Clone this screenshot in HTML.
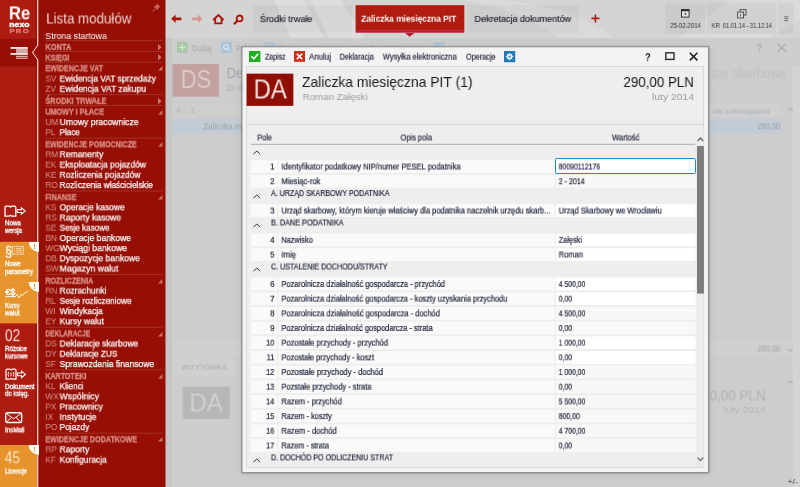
<!DOCTYPE html><html><head><meta charset="utf-8"><title>Renexo PRO</title><style>
html,body{margin:0;padding:0;}body{width:800px;height:487px;overflow:hidden;position:relative;background:#cbcbcb;font-family:"Liberation Sans", sans-serif;}
.t{position:absolute;left:0;top:0;white-space:nowrap;line-height:1;display:inline-block;transform-origin:0 0;will-change:transform;}
svg{position:absolute;overflow:visible;}
</style></head><body>
<svg style="left:165px;top:0px" width="635" height="487"><rect x="0.00" y="0.00" width="635.00" height="487.00" fill="#cdcdcd"/></svg>
<svg style="left:165px;top:0px" width="635" height="38"><rect x="0.00" y="0.00" width="635.00" height="38.00" fill="#d4d4d4"/></svg>
<svg style="left:165px;top:38px" width="7" height="449"><rect x="0.50" y="0.00" width="6.50" height="449.00" fill="#c6c6c6"/></svg>
<svg style="left:792px;top:66px" width="8" height="421"><rect x="0.60" y="0.00" width="7.40" height="421.00" fill="#d4d4d4"/></svg>
<svg style="left:0px;top:0px" width="38" height="487"><rect x="0.00" y="0.00" width="38.00" height="487.00" fill="#ad1c10"/></svg>
<svg style="left:35px;top:0px" width="2" height="487"><rect x="0.00" y="0.00" width="2.00" height="487.00" fill="#a0170c"/></svg>
<svg style="left:0px;top:38px" width="37" height="29"><rect x="0.00" y="0.90" width="37.00" height="27.50" fill="#960e04"/></svg>
<svg style="left:38px;top:0px" width="128" height="487"><rect x="0.00" y="0.00" width="127.50" height="487.00" fill="#960e04"/></svg>
<svg style="left:0;top:0" width="40" height="487"><path d="M37.7 0 V45.5 L32.7 52.5 L37.7 59.5 V487" fill="none" stroke="#f3d9d6" stroke-width="1.2"/><path d="M38.3 45.5 L33.3 52.5 L38.3 59.5 Z" fill="#960e04"/></svg>
<span class="t" id="t0" style="font-size:14.9px;color:#f0d4d0;transform:translate(46.20px,11.49px) scaleX(0.8951);">Lista modułów</span>
<span class="t" id="t1" style="font-size:9.2px;color:#ffffff;transform:translate(45.30px,32.01px) scaleX(0.9571);">Strona startowa</span>
<svg style="left:152px;top:3px" width="9" height="9" viewBox="0 0 9 9"><path d="M5 0.5 L8.5 4 L7.3 4.3 L5.8 5.8 L5.6 7.6 L1.4 3.4 L3.2 3.2 L4.7 1.7 Z" fill="#bd6a61"/><path d="M3 6 L0.5 8.5" stroke="#bd6a61" stroke-width="1"/></svg>
<svg style="left:45px;top:40px" width="118" height="2"><rect x="0.50" y="0.30" width="117.00" height="0.90" fill="#a7362b"/></svg>
<span class="t" id="t2" style="font-size:8.4px;color:#dc9088;font-weight:bold;transform:translate(45.40px,42.94px) scaleX(0.8917);-webkit-text-stroke:0.3px #dc9088;">KONTA</span>
<svg style="left:158.3px;top:43.6px" width="4" height="7"><path d="M0 0 L3.6 3.3 L0 6.6 Z" fill="#c9776d"/></svg>
<svg style="left:45px;top:51px" width="118" height="1"><rect x="0.50" y="0.00" width="117.00" height="0.90" fill="#a7362b"/></svg>
<span class="t" id="t3" style="font-size:8.4px;color:#dc9088;font-weight:bold;transform:translate(45.40px,53.66px) scaleX(0.8489);-webkit-text-stroke:0.3px #dc9088;">KSIĘGI</span>
<svg style="left:158.3px;top:54.300000000000004px" width="4" height="7"><path d="M0 0 L3.6 3.3 L0 6.6 Z" fill="#c9776d"/></svg>
<svg style="left:45px;top:61px" width="118" height="2"><rect x="0.50" y="0.70" width="117.00" height="0.90" fill="#a7362b"/></svg>
<span class="t" id="t4" style="font-size:8.4px;color:#dc9088;font-weight:bold;transform:translate(45.40px,64.31px) scaleX(0.8518);-webkit-text-stroke:0.3px #dc9088;">EWIDENCJE VAT</span>
<svg style="left:157.6px;top:66.39999999999999px" width="5" height="5"><path d="M4.4 0 V4.4 H0 Z" fill="#c6756b"/></svg>
<span class="t" id="t5" style="font-size:9.5px;color:#dc968e;transform:translate(45.40px,73.55px) scaleX(0.8700);">SV</span>
<span class="t" id="t6" style="font-size:9.3px;color:#ffffff;transform:translate(59.60px,74.53px) scaleX(0.9046);-webkit-text-stroke:0.25px #fff;">Ewidencja VAT sprzedaży</span>
<span class="t" id="t7" style="font-size:9.5px;color:#dc968e;transform:translate(45.40px,83.77px) scaleX(0.8700);">ZV</span>
<span class="t" id="t8" style="font-size:9.3px;color:#ffffff;transform:translate(59.60px,84.74px) scaleX(0.9185);-webkit-text-stroke:0.25px #fff;">Ewidencja VAT zakupu</span>
<svg style="left:45px;top:94px" width="118" height="2"><rect x="0.50" y="0.20" width="117.00" height="0.90" fill="#a7362b"/></svg>
<span class="t" id="t9" style="font-size:8.4px;color:#dc9088;font-weight:bold;transform:translate(45.40px,96.80px) scaleX(0.8686);-webkit-text-stroke:0.3px #dc9088;">ŚRODKI TRWAŁE</span>
<svg style="left:158.3px;top:97.5px" width="4" height="7"><path d="M0 0 L3.6 3.3 L0 6.6 Z" fill="#c9776d"/></svg>
<svg style="left:45px;top:105px" width="118" height="1"><rect x="0.50" y="0.00" width="117.00" height="0.90" fill="#a7362b"/></svg>
<span class="t" id="t10" style="font-size:8.4px;color:#dc9088;font-weight:bold;transform:translate(45.40px,107.66px) scaleX(0.8586);-webkit-text-stroke:0.3px #dc9088;">UMOWY I PŁACE</span>
<svg style="left:157.6px;top:109.69999999999999px" width="5" height="5"><path d="M4.4 0 V4.4 H0 Z" fill="#c6756b"/></svg>
<span class="t" id="t11" style="font-size:9.5px;color:#dc968e;transform:translate(45.40px,117.06px) scaleX(0.8700);">UM</span>
<span class="t" id="t12" style="font-size:9.3px;color:#ffffff;transform:translate(59.60px,118.03px) scaleX(0.9267);-webkit-text-stroke:0.25px #fff;">Umowy pracownicze</span>
<span class="t" id="t13" style="font-size:9.5px;color:#dc968e;transform:translate(45.40px,127.13px) scaleX(0.8700);">PL</span>
<span class="t" id="t14" style="font-size:9.3px;color:#ffffff;transform:translate(59.60px,128.17px) scaleX(0.8639);-webkit-text-stroke:0.25px #fff;">Płace</span>
<svg style="left:45px;top:137px" width="118" height="2"><rect x="0.50" y="0.70" width="117.00" height="0.90" fill="#a7362b"/></svg>
<span class="t" id="t15" style="font-size:8.4px;color:#dc9088;font-weight:bold;transform:translate(45.40px,140.31px) scaleX(0.8375);-webkit-text-stroke:0.3px #dc9088;">EWIDENCJE POMOCNICZE</span>
<svg style="left:157.6px;top:142.4px" width="5" height="5"><path d="M4.4 0 V4.4 H0 Z" fill="#c6756b"/></svg>
<span class="t" id="t16" style="font-size:9.5px;color:#dc968e;transform:translate(45.40px,149.27px) scaleX(0.8700);">RM</span>
<span class="t" id="t17" style="font-size:9.3px;color:#ffffff;transform:translate(59.60px,150.24px) scaleX(0.9191);-webkit-text-stroke:0.25px #fff;">Remanenty</span>
<span class="t" id="t18" style="font-size:9.5px;color:#dc968e;transform:translate(45.40px,159.55px) scaleX(0.8700);">EK</span>
<span class="t" id="t19" style="font-size:9.3px;color:#ffffff;transform:translate(59.60px,160.53px) scaleX(0.9135);-webkit-text-stroke:0.25px #fff;">Eksploatacja pojazdów</span>
<span class="t" id="t20" style="font-size:9.5px;color:#dc968e;transform:translate(45.40px,169.77px) scaleX(0.8700);">KE</span>
<span class="t" id="t21" style="font-size:9.3px;color:#ffffff;transform:translate(59.60px,170.74px) scaleX(0.9037);-webkit-text-stroke:0.25px #fff;">Rozliczenia pojazdów</span>
<span class="t" id="t22" style="font-size:9.5px;color:#dc968e;transform:translate(45.40px,179.92px) scaleX(0.8700);">RO</span>
<span class="t" id="t23" style="font-size:9.3px;color:#ffffff;transform:translate(59.60px,180.95px) scaleX(0.8808);-webkit-text-stroke:0.25px #fff;">Rozliczenia właścicielskie</span>
<svg style="left:45px;top:190px" width="118" height="2"><rect x="0.50" y="0.50" width="117.00" height="0.90" fill="#a7362b"/></svg>
<span class="t" id="t24" style="font-size:8.4px;color:#dc9088;font-weight:bold;transform:translate(45.40px,193.16px) scaleX(0.8432);-webkit-text-stroke:0.3px #dc9088;">FINANSE</span>
<svg style="left:157.6px;top:195.2px" width="5" height="5"><path d="M4.4 0 V4.4 H0 Z" fill="#c6756b"/></svg>
<span class="t" id="t25" style="font-size:9.5px;color:#dc968e;transform:translate(45.40px,202.27px) scaleX(0.8700);">KS</span>
<span class="t" id="t26" style="font-size:9.3px;color:#ffffff;transform:translate(59.60px,203.24px) scaleX(0.9047);-webkit-text-stroke:0.25px #fff;">Operacje kasowe</span>
<span class="t" id="t27" style="font-size:9.5px;color:#dc968e;transform:translate(45.40px,212.42px) scaleX(0.8700);">RS</span>
<span class="t" id="t28" style="font-size:9.3px;color:#ffffff;transform:translate(59.60px,213.45px) scaleX(0.9209);-webkit-text-stroke:0.25px #fff;">Raporty kasowe</span>
<span class="t" id="t29" style="font-size:9.5px;color:#dc968e;transform:translate(45.40px,222.63px) scaleX(0.8700);">SE</span>
<span class="t" id="t30" style="font-size:9.3px;color:#ffffff;transform:translate(59.60px,223.67px) scaleX(0.8697);-webkit-text-stroke:0.25px #fff;">Sesje kasowe</span>
<span class="t" id="t31" style="font-size:9.5px;color:#dc968e;transform:translate(45.40px,232.92px) scaleX(0.8700);">BN</span>
<span class="t" id="t32" style="font-size:9.3px;color:#ffffff;transform:translate(59.60px,233.95px) scaleX(0.9209);-webkit-text-stroke:0.25px #fff;">Operacje bankowe</span>
<span class="t" id="t33" style="font-size:9.5px;color:#dc968e;transform:translate(45.40px,243.06px) scaleX(0.8700);">WG</span>
<span class="t" id="t34" style="font-size:9.3px;color:#ffffff;transform:translate(59.60px,244.03px) scaleX(0.9327);-webkit-text-stroke:0.25px #fff;">Wyciągi bankowe</span>
<span class="t" id="t35" style="font-size:9.5px;color:#dc968e;transform:translate(45.40px,253.27px) scaleX(0.8700);">DB</span>
<span class="t" id="t36" style="font-size:9.3px;color:#ffffff;transform:translate(59.60px,254.24px) scaleX(0.9182);-webkit-text-stroke:0.25px #fff;">Dyspozycje bankowe</span>
<span class="t" id="t37" style="font-size:9.5px;color:#dc968e;transform:translate(45.40px,263.42px) scaleX(0.8700);">SW</span>
<span class="t" id="t38" style="font-size:9.3px;color:#ffffff;transform:translate(59.60px,264.45px) scaleX(0.9465);-webkit-text-stroke:0.25px #fff;">Magazyn walut</span>
<svg style="left:45px;top:274px" width="118" height="1"><rect x="0.50" y="0.00" width="117.00" height="0.90" fill="#a7362b"/></svg>
<span class="t" id="t39" style="font-size:8.4px;color:#dc9088;font-weight:bold;transform:translate(45.40px,276.66px) scaleX(0.8491);-webkit-text-stroke:0.3px #dc9088;">ROZLICZENIA</span>
<svg style="left:157.6px;top:278.70000000000005px" width="5" height="5"><path d="M4.4 0 V4.4 H0 Z" fill="#c6756b"/></svg>
<span class="t" id="t40" style="font-size:9.5px;color:#dc968e;transform:translate(45.40px,285.55px) scaleX(0.8700);">RN</span>
<span class="t" id="t41" style="font-size:9.3px;color:#ffffff;transform:translate(59.60px,286.53px) scaleX(0.9074);-webkit-text-stroke:0.25px #fff;">Rozrachunki</span>
<span class="t" id="t42" style="font-size:9.5px;color:#dc968e;transform:translate(45.40px,295.85px) scaleX(0.8700);">RL</span>
<span class="t" id="t43" style="font-size:9.3px;color:#ffffff;transform:translate(59.60px,296.81px) scaleX(0.8817);-webkit-text-stroke:0.25px #fff;">Sesje rozliczeniowe</span>
<span class="t" id="t44" style="font-size:9.5px;color:#dc968e;transform:translate(45.40px,306.06px) scaleX(0.8700);">WI</span>
<span class="t" id="t45" style="font-size:9.3px;color:#ffffff;transform:translate(59.60px,307.03px) scaleX(0.9086);-webkit-text-stroke:0.25px #fff;">Windykacja</span>
<span class="t" id="t46" style="font-size:9.5px;color:#dc968e;transform:translate(45.40px,316.27px) scaleX(0.8700);">EY</span>
<span class="t" id="t47" style="font-size:9.3px;color:#ffffff;transform:translate(59.60px,317.24px) scaleX(0.9238);-webkit-text-stroke:0.25px #fff;">Kursy walut</span>
<svg style="left:45px;top:326px" width="118" height="2"><rect x="0.50" y="0.80" width="117.00" height="0.90" fill="#a7362b"/></svg>
<span class="t" id="t48" style="font-size:8.4px;color:#dc9088;font-weight:bold;transform:translate(45.40px,329.44px) scaleX(0.7825);-webkit-text-stroke:0.3px #dc9088;">DEKLARACJE</span>
<svg style="left:157.6px;top:331.5px" width="5" height="5"><path d="M4.4 0 V4.4 H0 Z" fill="#c6756b"/></svg>
<span class="t" id="t49" style="font-size:9.5px;color:#dc968e;transform:translate(45.40px,338.42px) scaleX(0.8700);">DS</span>
<span class="t" id="t50" style="font-size:9.3px;color:#ffffff;transform:translate(59.60px,339.45px) scaleX(0.9120);-webkit-text-stroke:0.25px #fff;">Deklaracje skarbowe</span>
<span class="t" id="t51" style="font-size:9.5px;color:#dc968e;transform:translate(45.40px,348.63px) scaleX(0.8700);">DY</span>
<span class="t" id="t52" style="font-size:9.3px;color:#ffffff;transform:translate(59.60px,349.66px) scaleX(0.8862);-webkit-text-stroke:0.25px #fff;">Deklaracje ZUS</span>
<span class="t" id="t53" style="font-size:9.5px;color:#dc968e;transform:translate(45.40px,358.92px) scaleX(0.8700);">SF</span>
<span class="t" id="t54" style="font-size:9.3px;color:#ffffff;transform:translate(59.60px,359.95px) scaleX(0.9141);-webkit-text-stroke:0.25px #fff;">Sprawozdania finansowe</span>
<svg style="left:45px;top:369px" width="118" height="2"><rect x="0.50" y="0.40" width="117.00" height="0.90" fill="#a7362b"/></svg>
<span class="t" id="t55" style="font-size:8.4px;color:#dc9088;font-weight:bold;transform:translate(45.40px,372.02px) scaleX(0.8439);-webkit-text-stroke:0.3px #dc9088;">KARTOTEKI</span>
<svg style="left:157.6px;top:374.1px" width="5" height="5"><path d="M4.4 0 V4.4 H0 Z" fill="#c6756b"/></svg>
<span class="t" id="t56" style="font-size:9.5px;color:#dc968e;transform:translate(45.40px,381.13px) scaleX(0.8700);">KL</span>
<span class="t" id="t57" style="font-size:9.3px;color:#ffffff;transform:translate(59.60px,382.16px) scaleX(0.8726);-webkit-text-stroke:0.25px #fff;">Klienci</span>
<span class="t" id="t58" style="font-size:9.5px;color:#dc968e;transform:translate(45.40px,391.34px) scaleX(0.8700);">WX</span>
<span class="t" id="t59" style="font-size:9.3px;color:#ffffff;transform:translate(59.60px,392.31px) scaleX(0.9298);-webkit-text-stroke:0.25px #fff;">Wspólnicy</span>
<span class="t" id="t60" style="font-size:9.5px;color:#dc968e;transform:translate(45.40px,401.55px) scaleX(0.8700);">PX</span>
<span class="t" id="t61" style="font-size:9.3px;color:#ffffff;transform:translate(59.60px,402.53px) scaleX(0.9086);-webkit-text-stroke:0.25px #fff;">Pracownicy</span>
<span class="t" id="t62" style="font-size:9.5px;color:#dc968e;transform:translate(45.40px,411.85px) scaleX(0.8700);">IX</span>
<span class="t" id="t63" style="font-size:9.3px;color:#ffffff;transform:translate(59.60px,412.82px) scaleX(0.9394);-webkit-text-stroke:0.25px #fff;">Instytucje</span>
<span class="t" id="t64" style="font-size:9.5px;color:#dc968e;transform:translate(45.40px,421.92px) scaleX(0.8700);">PO</span>
<span class="t" id="t65" style="font-size:9.3px;color:#ffffff;transform:translate(59.60px,422.95px) scaleX(0.8964);-webkit-text-stroke:0.25px #fff;">Pojazdy</span>
<svg style="left:45px;top:432px" width="118" height="2"><rect x="0.50" y="0.70" width="117.00" height="0.90" fill="#a7362b"/></svg>
<span class="t" id="t66" style="font-size:8.4px;color:#dc9088;font-weight:bold;transform:translate(45.40px,435.31px) scaleX(0.8535);-webkit-text-stroke:0.3px #dc9088;">EWIDENCJE DODATKOWE</span>
<svg style="left:157.6px;top:437.40000000000003px" width="5" height="5"><path d="M4.4 0 V4.4 H0 Z" fill="#c6756b"/></svg>
<span class="t" id="t67" style="font-size:9.5px;color:#dc968e;transform:translate(45.40px,444.34px) scaleX(0.8700);">RP</span>
<span class="t" id="t68" style="font-size:9.3px;color:#ffffff;transform:translate(59.60px,445.31px) scaleX(0.9106);-webkit-text-stroke:0.25px #fff;">Raporty</span>
<span class="t" id="t69" style="font-size:9.5px;color:#dc968e;transform:translate(45.40px,454.63px) scaleX(0.8700);">KF</span>
<span class="t" id="t70" style="font-size:9.3px;color:#ffffff;transform:translate(59.60px,455.67px) scaleX(0.9122);-webkit-text-stroke:0.25px #fff;">Konfiguracja</span>
<span class="t" id="t71" style="font-size:18.3px;color:#ffffff;font-weight:bold;transform:translate(8.90px,4.41px) scaleX(0.9070);">Re</span>
<span class="t" id="t72" style="font-size:7.3px;color:#ffffff;font-weight:bold;transform:translate(9.30px,21.33px) scaleX(1.1919);-webkit-text-stroke:0.35px #fff;">nexo</span>
<span class="t" id="t73" style="font-size:5.2px;color:#d48a80;font-weight:bold;transform:translate(9.40px,29.00px) scaleX(1.4456);letter-spacing:1px;-webkit-text-stroke:0.25px #d48a80;">PRO</span>
<svg style="left:10px;top:46px" width="19" height="14" viewBox="0 0 19 14"><rect x="6.1" y="2.6" width="11.65" height="4.6" fill="#c79d98"/><rect x="6.1" y="3.7" width="11.65" height="0.6" fill="#dcc1be"/><rect x="6.1" y="5.4" width="11.65" height="0.6" fill="#dcc1be"/><rect x="0.5" y="1.1" width="17.25" height="1.65" fill="#fff"/><rect x="0.5" y="7.1" width="17.25" height="1.65" fill="#fff"/><rect x="6.1" y="9.8" width="11.65" height="1" fill="#efd9d6"/><rect x="6.1" y="11.7" width="11.65" height="1" fill="#efd9d6"/></svg>
<svg style="left:4.2px;top:204.6px" width="23" height="12" viewBox="0 0 23 12"><path d="M1 2.4 Q1 1.2 2.2 1.2 H5 Q6.2 1.2 6.4 2.6 Q6.6 1.2 7.8 1.2 H10.6 Q11.8 1.2 11.8 2.4 V11 H7.8 Q6.6 11 6.4 9.8 Q6.2 11 5 11 H1 Z" fill="none" stroke="#fff" stroke-width="1.25"/><path d="M13.2 4.6 H17.4 V2.8 L21.2 6 L17.4 9.2 V7.4 H13.2 Z" fill="none" stroke="#fff" stroke-width="1.05"/></svg>
<span class="t" id="t74" style="font-size:6.3px;color:#ffffff;transform:translate(5.00px,220.35px) scaleX(0.9870);-webkit-text-stroke:0.3px #fff;">Nowa</span>
<span class="t" id="t75" style="font-size:6.3px;color:#ffffff;transform:translate(5.00px,227.85px) scaleX(0.9284);-webkit-text-stroke:0.3px #fff;">wersja</span>
<svg style="left:0px;top:241px" width="37" height="42"><rect x="0.00" y="0.80" width="37.00" height="40.40" fill="#e5932a"/></svg>
<svg style="left:0px;top:282px" width="37" height="1"><rect x="0.00" y="0.20" width="37.00" height="0.80" fill="#f0b05c"/></svg>
<svg style="left:0px;top:283px" width="37" height="41"><rect x="0.00" y="0.00" width="37.00" height="40.40" fill="#e5932a"/></svg>
<svg style="left:28.6px;top:241.7px" width="10" height="10" viewBox="0 0 10 10"><path d="M-0.2 0 A10.2 9.8 0 0 0 10 9.8 V0 Z" fill="#ffffff"/></svg>
<span class="t" id="t76" style="font-size:7.0px;color:#e08a1e;font-weight:bold;transform:translate(33.30px,242.78px) scaleX(1.0000);">!</span>
<svg style="left:28.6px;top:282.4px" width="10" height="10" viewBox="0 0 10 10"><path d="M-0.2 0 A10.2 9.8 0 0 0 10 9.8 V0 Z" fill="#ffffff"/></svg>
<span class="t" id="t77" style="font-size:7.0px;color:#e08a1e;font-weight:bold;transform:translate(33.30px,283.48px) scaleX(1.0000);">!</span>
<span class="t" id="t78" style="font-size:14.8px;color:#ffffff;transform:translate(5.00px,244.81px) scaleX(0.8501);-webkit-text-stroke:0.3px #fff;">§</span>
<svg style="left:12.2px;top:246.4px" width="12" height="9" viewBox="0 0 12 9"><rect x="0.5" y="0.5" width="10.8" height="7.6" fill="none" stroke="#f8dcb8" stroke-width="0.9"/><path d="M2 2.4 H3 M4 2.4 H9.8 M2 4.3 H3 M4 4.3 H9.8 M2 6.2 H3 M4 6.2 H9.8" stroke="#f8dcb8" stroke-width="0.9"/></svg>
<span class="t" id="t79" style="font-size:6.3px;color:#ffffff;transform:translate(5.00px,261.06px) scaleX(0.9746);-webkit-text-stroke:0.3px #fff;">Nowe</span>
<span class="t" id="t80" style="font-size:6.3px;color:#ffffff;transform:translate(5.00px,269.06px) scaleX(0.9803);-webkit-text-stroke:0.3px #fff;">parametry</span>
<span class="t" id="t81" style="font-size:8.8px;color:#ffffff;transform:translate(5.20px,287.70px) scaleX(1.0411);-webkit-text-stroke:0.35px #fff;">€$</span>
<svg style="left:0px;top:284px" width="30" height="18" viewBox="0 0 30 18"><path d="M5.3 12.7 H15.6" stroke="#fff" stroke-width="1"/><path d="M15.4 12.8 L17 10.4 L19 14 L21 10.4 L22.5 11.5 L24.5 9 L27.6 7.3" fill="none" stroke="#fff" stroke-width="0.9"/></svg>
<span class="t" id="t82" style="font-size:6.3px;color:#ffffff;transform:translate(5.00px,302.85px) scaleX(0.9063);-webkit-text-stroke:0.3px #fff;">Kursy</span>
<span class="t" id="t83" style="font-size:6.3px;color:#ffffff;transform:translate(5.00px,310.35px) scaleX(0.9930);-webkit-text-stroke:0.3px #fff;">walut</span>
<span class="t" id="t84" style="font-size:16px;color:#f6dcd9;transform:translate(4.90px,328.13px) scaleX(0.8541);">02</span>
<span class="t" id="t85" style="font-size:6.3px;color:#ffffff;transform:translate(5.00px,346.02px) scaleX(0.9626);-webkit-text-stroke:0.3px #fff;">Różnice</span>
<span class="t" id="t86" style="font-size:6.3px;color:#ffffff;transform:translate(5.00px,353.48px) scaleX(0.9679);-webkit-text-stroke:0.3px #fff;">kursowe</span>
<svg style="left:4.8px;top:367.8px" width="22" height="13" viewBox="0 0 22 13"><path d="M1 2.6 Q1 1.2 2.4 1.2 H4.6 Q5.8 1.2 6 2.4 Q6.2 1.2 7.4 1.2 H9.6 Q11 1.2 11 2.6 V11.2 H7.4 Q6.2 11.2 6 10 Q5.8 11.2 4.6 11.2 H1 Z" fill="none" stroke="#fff" stroke-width="1.2"/><path d="M3.6 4 Q2.6 6.2 3.6 8.6 M8.4 4 Q9.4 6.2 8.4 8.6 M6 4.4 V8.4" fill="none" stroke="#fff" stroke-width="0.9"/><path d="M12.4 5 H16.6 V3.2 L20.4 6.4 L16.6 9.6 V7.8 H12.4 Z" fill="none" stroke="#fff" stroke-width="1.05"/></svg>
<span class="t" id="t87" style="font-size:6.3px;color:#ffffff;transform:translate(5.00px,384.02px) scaleX(1.0312);-webkit-text-stroke:0.3px #fff;">Dokument</span>
<span class="t" id="t88" style="font-size:6.3px;color:#ffffff;transform:translate(5.00px,390.77px) scaleX(0.9483);-webkit-text-stroke:0.3px #fff;">do księg.</span>
<svg style="left:4.5px;top:412.3px" width="18" height="12" viewBox="0 0 18 12"><rect x="0.75" y="0.75" width="15.9" height="9.8" rx="1.6" fill="none" stroke="#fff" stroke-width="1.4"/><path d="M1.6 1.8 L8.7 6.8 L15.8 1.8 M1.8 9.6 L6.6 5.4 M15.6 9.6 L10.8 5.4" fill="none" stroke="#fff" stroke-width="0.95"/></svg>
<span class="t" id="t89" style="font-size:6.3px;color:#ffffff;transform:translate(5.00px,427.27px) scaleX(0.9673);-webkit-text-stroke:0.3px #fff;">InsMail</span>
<svg style="left:0px;top:445px" width="37" height="42"><rect x="0.00" y="0.00" width="37.00" height="42.00" fill="#e5932a"/></svg>
<svg style="left:28.6px;top:445px" width="10" height="10" viewBox="0 0 10 10"><path d="M-0.2 0 A10.2 9.8 0 0 0 10 9.8 V0 Z" fill="#ffffff"/></svg>
<span class="t" id="t90" style="font-size:7.0px;color:#e08a1e;font-weight:bold;transform:translate(33.30px,446.08px) scaleX(1.0000);">!</span>
<span class="t" id="t91" style="font-size:15.6px;color:#fbe6c8;transform:translate(4.80px,450.21px) scaleX(0.8641);">45</span>
<span class="t" id="t92" style="font-size:6.3px;color:#ffffff;transform:translate(5.00px,468.56px) scaleX(0.9433);-webkit-text-stroke:0.3px #fff;">Licencje</span>
<svg style="left:0;top:0" width="800" height="38" viewBox="0 0 800 38"><path d="M274 0 L304 0 L324 38 L291 38 Z M310 0 L341 0 L365 38 L329 38 Z" fill="#e0e0e0" opacity="0.75"/><path d="M462 0 L505 0 Q575 8 614 38 L560 38 Q520 10 462 0 Z" fill="#dddddd" opacity="0.7"/><path d="M730 0 L800 0 L800 20 L768 38 L679 38 Z" fill="#dedede" opacity="0.55"/></svg>
<svg style="left:170px;top:12px" width="75" height="14" viewBox="0 0 75 14"><path d="M1.2 6.8 L5.6 2.6 V5.4 H11.4 V8.2 H5.6 V11 Z" fill="#aa150b"/><path d="M32.4 6.8 L28 2.6 V5.4 H22.2 V8.2 H28 V11 Z" fill="#d6948e"/><path d="M43.2 8 L48.4 3 L53.6 8 M45.2 7 V11.4 H51.6 V7" fill="none" stroke="#aa150b" stroke-width="1.8"/><circle cx="69.6" cy="6.4" r="2.9" fill="none" stroke="#aa150b" stroke-width="1.8"/><path d="M67.5 8.6 L63.9 12.2" stroke="#aa150b" stroke-width="2.2"/></svg>
<svg style="left:253px;top:5px" width="100" height="28"><rect x="0.40" y="0.20" width="98.80" height="27.40" fill="rgba(0,0,0,0.035)"/></svg>
<span class="t" id="t93" style="font-size:9.6px;color:#1c1c2c;transform:translate(259.80px,14.07px) scaleX(0.9522);-webkit-text-stroke:0.15px #1c1c2c;">Środki trwałe</span>
<svg style="left:355px;top:5px" width="110" height="26"><rect x="0.60" y="0.20" width="108.70" height="25.60" fill="#b01c10"/></svg>
<svg style="left:355px;top:30px" width="110" height="3"><rect x="0.60" y="0.60" width="108.70" height="2.10" fill="#c11a36"/></svg>
<svg style="left:405px;top:32.5px" width="10" height="5"><path d="M0 0 H9.4 L4.7 3.7 Z" fill="#c11a36"/></svg>
<span class="t" id="t94" style="font-size:9.7px;color:#ffffff;font-weight:bold;transform:translate(361.20px,13.71px) scaleX(0.8647);">Zaliczka miesięczna PIT</span>
<svg style="left:467px;top:5px" width="113" height="28"><rect x="0.60" y="0.20" width="111.60" height="27.40" fill="rgba(0,0,0,0.035)"/></svg>
<span class="t" id="t95" style="font-size:9.6px;color:#1c1c2c;transform:translate(474.50px,13.93px) scaleX(0.9386);-webkit-text-stroke:0.15px #1c1c2c;">Dekretacja dokumentów</span>
<svg style="left:590.6px;top:14px" width="9" height="9"><path d="M4.4 0.4 V8.4 M0.4 4.4 H8.4" stroke="#b01c10" stroke-width="1.6"/></svg>
<svg style="left:665px;top:3px" width="41" height="32"><rect x="0.00" y="0.30" width="40.60" height="30.80" fill="rgba(0,0,0,0.04)"/></svg>
<svg style="left:707px;top:3px" width="70" height="32"><rect x="0.00" y="0.30" width="69.60" height="30.80" fill="rgba(0,0,0,0.04)"/></svg>
<svg style="left:778px;top:3px" width="16" height="32"><rect x="0.20" y="0.30" width="15.40" height="30.80" fill="rgba(0,0,0,0.04)"/></svg>
<svg style="left:680.5px;top:9px" width="9" height="9" viewBox="0 0 9 9"><rect x="0.5" y="0.5" width="7.6" height="7.6" fill="#e6e6e6" stroke="#333" stroke-width="1"/><rect x="0.5" y="0.5" width="7.6" height="1.8" fill="#333"/><rect x="3.6" y="4.2" width="1.6" height="1.6" fill="#333"/></svg>
<span class="t" id="t96" style="font-size:6.6px;color:#333333;transform:translate(670.20px,22.89px) scaleX(0.9071);">25-02-2014</span>
<svg style="left:737px;top:8.5px" width="10" height="10" viewBox="0 0 10 10"><rect x="3" y="0.6" width="6" height="5.4" fill="none" stroke="#444" stroke-width="0.9"/><rect x="0.6" y="3" width="6" height="6" fill="#d6d6d6" stroke="#444" stroke-width="0.9"/><path d="M3.6 5 V7.4" stroke="#444" stroke-width="0.8"/></svg>
<span class="t" id="t97" style="font-size:6.6px;color:#333333;transform:translate(711.80px,22.89px) scaleX(0.8596);white-space:pre;">KR  01.01.14 - 31.12.14</span>
<svg style="left:784.2px;top:16px" width="5" height="6"><path d="M0.2 0.8 H4.2 M0.2 2.7 H4.2 M0.2 4.6 H4.2" stroke="#666" stroke-width="0.9"/></svg>
<svg style="left:177px;top:42.4px" width="11" height="11"><rect width="10.6" height="10.8" fill="#a8c8a6"/><path d="M5.3 2.2 V8.6 M2.1 5.4 H8.5" stroke="#d6e6d4" stroke-width="1.4"/></svg>
<span class="t" id="t98" style="font-size:8.6px;color:#a9a9a9;transform:translate(192.00px,44.27px) scaleX(0.8679);">Dodaj</span>
<svg style="left:220.5px;top:42.4px" width="11" height="11"><rect width="10.8" height="10.8" fill="#a9c3d6"/><circle cx="5" cy="4.8" r="2.3" fill="none" stroke="#dbe6ee" stroke-width="1.1"/><path d="M6.6 6.6 L8.8 8.8" stroke="#dbe6ee" stroke-width="1.3"/></svg>
<span class="t" id="t99" style="font-size:8.6px;color:#a9a9a9;transform:translate(236.00px,44.27px) scaleX(0.8371);">Pokaż</span>
<svg style="left:263.5px;top:42.4px" width="11" height="11"><rect width="10.8" height="10.8" fill="#b3c6d6"/></svg>
<span class="t" id="t100" style="font-size:8.6px;color:#b0b0b0;transform:translate(279.00px,44.27px) scaleX(0.8236);">Popraw</span>
<span class="t" id="t101" style="font-size:8.6px;color:#b0b0b0;transform:translate(311.00px,44.27px) scaleX(0.8889);">Operacje</span>
<span class="t" id="t102" style="font-size:8.6px;color:#b0b0b0;transform:translate(352.00px,44.27px) scaleX(0.9065);">Wysyłka elektroniczna</span>
<svg style="left:434px;top:42.4px" width="11" height="11"><rect width="10.8" height="10.8" fill="#b3c6d6"/></svg>
<svg style="left:172px;top:63px" width="47" height="34"><rect x="0.40" y="0.90" width="46.60" height="32.70" fill="#c3a19e"/></svg>
<span class="t" id="t103" style="font-size:26.6px;color:#d8cbc9;transform:translate(180.60px,66.01px) scaleX(0.8281);">DS</span>
<span class="t" id="t104" style="font-size:14.6px;color:#a3a6ae;transform:translate(226.60px,65.92px) scaleX(0.8898);">De</span>
<span class="t" id="t105" style="font-size:8.2px;color:#b0b0b0;transform:translate(226.30px,84.64px) scaleX(0.8299);">Za ok</span>
<svg style="left:172px;top:103px" width="12" height="14"><rect x="0.50" y="0.50" width="11.50" height="13.50" fill="#cecece"/></svg>
<svg style="left:185px;top:103px" width="14" height="14"><rect x="0.50" y="0.50" width="13.50" height="13.50" fill="#cecece"/></svg>
<svg style="left:200px;top:103px" width="46" height="14"><rect x="0.50" y="0.50" width="45.00" height="13.50" fill="#cecece"/></svg>
<span class="t" id="t106" style="font-size:7.6px;color:#b0b0b0;transform:translate(176.60px,106.84px) scaleX(0.9300);">K</span>
<span class="t" id="t107" style="font-size:7.6px;color:#b0b0b0;transform:translate(190.60px,106.84px) scaleX(0.9300);">Z</span>
<svg style="left:172px;top:118px" width="610" height="16"><rect x="0.50" y="0.50" width="609.50" height="15.30" fill="#c3ccd4"/></svg>
<span class="t" id="t108" style="font-size:8.4px;color:#9a9fa4;transform:translate(203.40px,122.46px) scaleX(0.9549);">Zaliczka mi</span>
<span class="t" id="t109" style="font-size:12.4px;color:#b2b2b2;font-weight:bold;transform:translate(756.60px,42.63px) scaleX(0.7390);">?</span>
<svg style="left:777.4px;top:43.4px" width="10" height="10"><path d="M0.8 0.8 L8.6 8.6 M8.6 0.8 L0.8 8.6" stroke="#b2b2b2" stroke-width="1.7"/></svg>
<span class="t" id="t110" style="font-size:14.8px;color:#c1c1c1;transform:translate(712.60px,66.02px) scaleX(0.8569);">cje skarbowe</span>
<svg style="left:709px;top:104px" width="74" height="14"><rect x="0.00" y="0.00" width="73.30" height="13.60" fill="#d0d0d0"/></svg>
<span class="t" id="t111" style="font-size:7.8px;color:#a8adb2;transform:translate(712.60px,107.65px) scaleX(0.9359);">ota zobowiązania</span>
<span class="t" id="t112" style="font-size:8.3px;color:#9a9fa4;transform:translate(757.60px,122.23px) scaleX(0.8822);">290,00</span>
<svg style="left:786.6px;top:107.4px" width="7" height="5"><path d="M0.5 3.7 L3.1 1 L5.7 3.7" fill="none" stroke="#b0b0b0" stroke-width="1.2"/></svg>
<svg style="left:172px;top:340px" width="621" height="15"><rect x="0.50" y="0.40" width="620.50" height="14.20" fill="#cfcfcf"/></svg>
<svg style="left:172px;top:340px" width="621" height="1"><rect x="0.50" y="0.20" width="620.50" height="0.80" fill="#d3d3d3"/></svg>
<svg style="left:172px;top:354px" width="621" height="2"><rect x="0.50" y="0.40" width="620.50" height="0.80" fill="#d3d3d3"/></svg>
<svg style="left:172px;top:375px" width="621" height="112"><rect x="0.50" y="0.40" width="620.50" height="111.60" fill="#cdcdcd"/></svg>
<span class="t" id="t113" style="font-size:8.3px;color:#a6a6a6;transform:translate(757.60px,344.44px) scaleX(0.8822);">290,00</span>
<svg style="left:786.6px;top:348px" width="7" height="5"><path d="M0.5 0.8 L3.1 3.5 L5.7 0.8" fill="none" stroke="#b0b0b0" stroke-width="1.2"/></svg>
<svg style="left:172px;top:359px" width="62" height="17"><rect x="0.60" y="0.30" width="61.20" height="16.50" fill="#d0d0d0"/></svg>
<svg style="left:172px;top:375px" width="621" height="2"><rect x="0.60" y="0.60" width="620.00" height="0.80" fill="#d1d1d1"/></svg>
<span class="t" id="t114" style="font-size:7.6px;color:#ababab;transform:translate(181.40px,363.69px) scaleX(0.9695);">WIZYTÓWKA</span>
<svg style="left:182px;top:386px" width="48" height="33"><rect x="0.60" y="0.50" width="47.10" height="32.50" fill="#b7b7b7"/></svg>
<span class="t" id="t115" style="font-size:26.6px;color:#cfcfcf;transform:translate(189.40px,389.41px) scaleX(0.9011);">DA</span>
<svg style="left:786.6px;top:379.8px" width="7" height="5"><path d="M0.5 3.7 L3.1 1 L5.7 3.7" fill="none" stroke="#b4b4b4" stroke-width="1.2"/></svg>
<span class="t" id="t116" style="font-size:14.2px;color:#b3b3b3;transform:translate(709.60px,388.46px) scaleX(0.9466);">0,00 PLN</span>
<span class="t" id="t117" style="font-size:9.4px;color:#b9b9b9;transform:translate(723.60px,405.01px) scaleX(1.1034);">luty 2014</span>
<span class="t" id="t118" style="font-size:7.4px;color:#444444;transform:translate(787.40px,477.79px) scaleX(1.1986);">+/-</span>
<div style="position:absolute;left:242px;top:47px;width:466px;height:425px;background:#f3f3f3;box-shadow:0 0 2.5px 0.5px rgba(0,0,0,0.38), 0 1px 10px 1px rgba(0,0,0,0.06);"></div>
<svg style="left:236px;top:40px" width="480" height="440"><rect x="6.0" y="6.8" width="466.5" height="425.8" fill="#f3f3f3" stroke="#8c8c8c" stroke-width="1"/></svg>
<div style="position:absolute;left:246.2px;top:66px;width:458.2px;height:402.4px;background:#eeeeee;border:1px solid #d9d9d9;box-sizing:border-box;"></div>
<svg style="left:249.3px;top:51.2px" width="12" height="12" viewBox="0 0 12 12"><rect width="11.4" height="11" fill="#1fae1f"/><path d="M2.4 5.4 L4.8 7.8 L9.2 2.8" fill="none" stroke="#fff" stroke-width="1.7"/></svg>
<span class="t" id="t119" style="font-size:8.3px;color:#20253a;transform:translate(265.00px,52.65px) scaleX(0.8430);-webkit-text-stroke:0.18px #20253a;">Zapisz</span>
<svg style="left:294px;top:51.4px" width="12" height="11" viewBox="0 0 12 11"><rect width="11" height="10.8" fill="#d42a1c"/><path d="M2.8 2.7 L8.2 8.1 M8.2 2.7 L2.8 8.1" fill="none" stroke="#fff" stroke-width="1.6"/></svg>
<span class="t" id="t120" style="font-size:8.3px;color:#20253a;transform:translate(309.00px,52.65px) scaleX(0.9533);-webkit-text-stroke:0.18px #20253a;">Anuluj</span>
<span class="t" id="t121" style="font-size:8.3px;color:#20253a;transform:translate(339.60px,52.65px) scaleX(0.8724);-webkit-text-stroke:0.18px #20253a;">Deklaracja</span>
<span class="t" id="t122" style="font-size:8.3px;color:#20253a;transform:translate(382.80px,52.65px) scaleX(0.8998);-webkit-text-stroke:0.18px #20253a;">Wysyłka elektroniczna</span>
<span class="t" id="t123" style="font-size:8.3px;color:#20253a;transform:translate(466.00px,52.65px) scaleX(0.8761);-webkit-text-stroke:0.18px #20253a;">Operacje</span>
<svg style="left:504px;top:51.2px" width="12" height="12" viewBox="0 0 12 12"><rect width="11.2" height="11.2" fill="#2079b8"/><circle cx="5.6" cy="5.6" r="2.2" fill="none" stroke="#e8f2fa" stroke-width="1.3"/><path d="M5.6 1.8 V9.4 M1.8 5.6 H9.4 M2.9 2.9 L8.3 8.3 M8.3 2.9 L2.9 8.3" stroke="#e8f2fa" stroke-width="0.9"/><circle cx="5.6" cy="5.6" r="0.9" fill="#2079b8"/></svg>
<span class="t" id="t124" style="font-size:11.4px;color:#222;font-weight:bold;transform:translate(645.00px,52.04px) scaleX(0.8036);">?</span>
<svg style="left:665.4px;top:52.4px" width="11" height="9"><rect x="0.8" y="0.8" width="8.2" height="6.6" fill="none" stroke="#2a2a2a" stroke-width="1.4"/></svg>
<svg style="left:688.6px;top:52.2px" width="10" height="10"><path d="M0.8 0.8 L8.4 8.4 M8.4 0.8 L0.8 8.4" stroke="#222" stroke-width="1.6"/></svg>
<svg style="left:245px;top:72px" width="50" height="35"><rect x="0.70" y="0.80" width="48.50" height="33.90" fill="#f7f7f7"/></svg>
<svg style="left:246px;top:73px" width="48" height="33"><rect x="0.50" y="0.60" width="46.90" height="32.30" fill="#900f05"/></svg>
<span class="t" id="t125" style="font-size:26.8px;color:#f6dfdc;transform:translate(253.60px,76.46px) scaleX(0.8943);">DA</span>
<span class="t" id="t126" style="font-size:14.4px;color:#1c1c1c;transform:translate(302.00px,74.97px) scaleX(0.9662);">Zaliczka miesięczna PIT (1)</span>
<span class="t" id="t127" style="font-size:9.8px;color:#9c9ca0;transform:translate(302.60px,92.03px) scaleX(0.9947);">Roman Załęski</span>
<span class="t" id="t128" style="font-size:14.4px;color:#1c1c1c;transform:translate(623.40px,74.97px) scaleX(0.9288);">290,00 PLN</span>
<span class="t" id="t129" style="font-size:9.8px;color:#9c9ca0;transform:translate(652.00px,92.11px) scaleX(1.0562);">luty 2014</span>
<svg style="left:247px;top:123px" width="457" height="2"><rect x="0.20" y="0.80" width="456.20" height="1.00" fill="#d2d2d2"/></svg>
<span class="t" id="t130" style="font-size:8.3px;color:#20253a;transform:translate(257.30px,133.45px) scaleX(0.8790);-webkit-text-stroke:0.18px #20253a;">Pole</span>
<span class="t" id="t131" style="font-size:8.3px;color:#20253a;transform:translate(400.50px,133.44px) scaleX(0.8984);-webkit-text-stroke:0.18px #20253a;">Opis pola</span>
<span class="t" id="t132" style="font-size:8.3px;color:#20253a;transform:translate(612.00px,133.44px) scaleX(0.9129);-webkit-text-stroke:0.18px #20253a;">Wartość</span>
<svg style="left:250px;top:143px" width="446" height="2"><rect x="0.80" y="0.80" width="444.60" height="1.10" fill="#b4b4b4"/></svg>
<svg style="left:695px;top:130px" width="9" height="337"><rect x="0.60" y="0.00" width="8.00" height="337.00" fill="#ececec"/></svg>
<svg style="left:697px;top:137.2px" width="8" height="5"><path d="M0.6 4 L3.4 1 L6.2 4" fill="none" stroke="#666" stroke-width="1.3"/></svg>
<svg style="left:697px;top:146px" width="7" height="148"><rect x="0.00" y="0.00" width="6.90" height="147.60" fill="#7c7c7c"/></svg>
<svg style="left:697.2px;top:457px" width="8" height="5"><path d="M0.6 0.6 L3.4 3.6 L6.2 0.6" fill="none" stroke="#666" stroke-width="1.3"/></svg>
<svg style="left:253px;top:150.40px" width="8" height="5"><path d="M0.5 4.2 L3.8 0.9 L7.1 4.2" fill="none" stroke="#333" stroke-width="1"/></svg>
<svg style="left:250px;top:160px" width="28" height="13"><rect x="0.80" y="0.18" width="26.40" height="12.70" fill="#fafafa"/></svg>
<svg style="left:278px;top:160px" width="277" height="13"><rect x="0.60" y="0.18" width="276.00" height="12.70" fill="#fafafa"/></svg>
<div style="position:absolute;left:555.3px;top:158.18px;width:140.6px;height:15.8px;background:#fff;border:1.4px solid #2388d2;border-radius:1.8px;box-sizing:border-box;"></div>
<span class="t" id="t133" style="font-size:8.3px;color:#20253a;transform:translate(270.24px,162.54px) scaleX(0.9000);-webkit-text-stroke:0.2px #20253a;">1</span>
<span class="t" id="t134" style="font-size:8.3px;color:#20253a;transform:translate(281.40px,162.54px) scaleX(0.9135);-webkit-text-stroke:0.2px #20253a;">Identyfikator podatkowy NIP/numer PESEL podatnika</span>
<span class="t" id="t135" style="font-size:8.3px;color:#20253a;transform:translate(558.70px,162.54px) scaleX(0.8254);-webkit-text-stroke:0.2px #20253a;">80090112176</span>
<svg style="left:250px;top:174px" width="28" height="14"><rect x="0.80" y="0.86" width="26.40" height="12.70" fill="#fafafa"/></svg>
<svg style="left:278px;top:174px" width="277" height="14"><rect x="0.60" y="0.86" width="276.00" height="12.70" fill="#fafafa"/></svg>
<svg style="left:555px;top:174px" width="141" height="14"><rect x="0.80" y="0.86" width="139.80" height="12.70" fill="#f8f8f8"/></svg>
<span class="t" id="t136" style="font-size:8.3px;color:#20253a;transform:translate(270.24px,177.22px) scaleX(0.9000);-webkit-text-stroke:0.2px #20253a;">2</span>
<span class="t" id="t137" style="font-size:8.3px;color:#20253a;transform:translate(281.40px,177.21px) scaleX(0.9193);-webkit-text-stroke:0.2px #20253a;">Miesiąc-rok</span>
<span class="t" id="t138" style="font-size:8.3px;color:#20253a;transform:translate(558.70px,177.21px) scaleX(0.8538);-webkit-text-stroke:0.2px #20253a;">2 - 2014</span>
<span class="t" id="t139" style="font-size:8.4px;color:#20253a;transform:translate(271.00px,189.05px) scaleX(0.8471);-webkit-text-stroke:0.18px #20253a;">A. URZĄD SKARBOWY PODATNIKA</span>
<svg style="left:253px;top:193.84px" width="8" height="5"><path d="M0.5 4.2 L3.8 0.9 L7.1 4.2" fill="none" stroke="#333" stroke-width="1"/></svg>
<svg style="left:250px;top:204px" width="28" height="13"><rect x="0.80" y="0.22" width="26.40" height="12.70" fill="#fafafa"/></svg>
<svg style="left:278px;top:204px" width="277" height="13"><rect x="0.60" y="0.22" width="276.00" height="12.70" fill="#fafafa"/></svg>
<svg style="left:555px;top:204px" width="141" height="13"><rect x="0.80" y="0.22" width="139.80" height="12.70" fill="#ffffff"/></svg>
<span class="t" id="t140" style="font-size:8.3px;color:#20253a;transform:translate(270.24px,206.56px) scaleX(0.9000);-webkit-text-stroke:0.2px #20253a;">3</span>
<span class="t" id="t141" style="font-size:8.3px;color:#20253a;transform:translate(281.40px,206.55px) scaleX(0.9091);-webkit-text-stroke:0.2px #20253a;">Urząd skarbowy, którym kieruje właściwy dla podatnika naczelnik urzędu skarb...</span>
<span class="t" id="t142" style="font-size:8.3px;color:#20253a;transform:translate(558.70px,206.55px) scaleX(0.9019);-webkit-text-stroke:0.2px #20253a;">Urząd Skarbowy we Wrocławiu</span>
<span class="t" id="t143" style="font-size:8.4px;color:#20253a;transform:translate(271.00px,218.45px) scaleX(0.8682);-webkit-text-stroke:0.18px #20253a;">B. DANE PODATNIKA</span>
<svg style="left:253px;top:223.20px" width="8" height="5"><path d="M0.5 4.2 L3.8 0.9 L7.1 4.2" fill="none" stroke="#333" stroke-width="1"/></svg>
<svg style="left:250px;top:233px" width="28" height="14"><rect x="0.80" y="0.58" width="26.40" height="12.70" fill="#fafafa"/></svg>
<svg style="left:278px;top:233px" width="277" height="14"><rect x="0.60" y="0.58" width="276.00" height="12.70" fill="#fafafa"/></svg>
<svg style="left:555px;top:233px" width="141" height="14"><rect x="0.80" y="0.58" width="139.80" height="12.70" fill="#ffffff"/></svg>
<span class="t" id="t144" style="font-size:8.3px;color:#20253a;transform:translate(270.24px,235.83px) scaleX(0.9000);-webkit-text-stroke:0.2px #20253a;">4</span>
<span class="t" id="t145" style="font-size:8.3px;color:#20253a;transform:translate(281.40px,235.83px) scaleX(0.8841);-webkit-text-stroke:0.2px #20253a;">Nazwisko</span>
<span class="t" id="t146" style="font-size:8.3px;color:#20253a;transform:translate(558.70px,235.83px) scaleX(0.8828);-webkit-text-stroke:0.2px #20253a;">Załęski</span>
<svg style="left:250px;top:248px" width="28" height="13"><rect x="0.80" y="0.26" width="26.40" height="12.70" fill="#fafafa"/></svg>
<svg style="left:278px;top:248px" width="277" height="13"><rect x="0.60" y="0.26" width="276.00" height="12.70" fill="#fafafa"/></svg>
<svg style="left:555px;top:248px" width="141" height="13"><rect x="0.80" y="0.26" width="139.80" height="12.70" fill="#ffffff"/></svg>
<span class="t" id="t147" style="font-size:8.3px;color:#20253a;transform:translate(270.24px,250.51px) scaleX(0.9000);-webkit-text-stroke:0.2px #20253a;">5</span>
<span class="t" id="t148" style="font-size:8.3px;color:#20253a;transform:translate(281.40px,250.51px) scaleX(0.9307);-webkit-text-stroke:0.2px #20253a;">Imię</span>
<span class="t" id="t149" style="font-size:8.3px;color:#20253a;transform:translate(558.70px,250.51px) scaleX(0.9047);-webkit-text-stroke:0.2px #20253a;">Roman</span>
<span class="t" id="t150" style="font-size:8.4px;color:#20253a;transform:translate(271.00px,262.47px) scaleX(0.8513);-webkit-text-stroke:0.18px #20253a;">C. USTALENIE DOCHODU/STRATY</span>
<svg style="left:253px;top:267.24px" width="8" height="5"><path d="M0.5 4.2 L3.8 0.9 L7.1 4.2" fill="none" stroke="#333" stroke-width="1"/></svg>
<svg style="left:250px;top:277px" width="28" height="14"><rect x="0.80" y="0.62" width="26.40" height="12.70" fill="#fafafa"/></svg>
<svg style="left:278px;top:277px" width="277" height="14"><rect x="0.60" y="0.62" width="276.00" height="12.70" fill="#fafafa"/></svg>
<svg style="left:555px;top:277px" width="141" height="14"><rect x="0.80" y="0.62" width="139.80" height="12.70" fill="#ffffff"/></svg>
<span class="t" id="t151" style="font-size:8.3px;color:#20253a;transform:translate(270.24px,279.98px) scaleX(0.9000);-webkit-text-stroke:0.2px #20253a;">6</span>
<span class="t" id="t152" style="font-size:8.3px;color:#20253a;transform:translate(281.40px,279.98px) scaleX(0.9003);-webkit-text-stroke:0.2px #20253a;">Pozarolnicza działalność gospodarcza - przychód</span>
<span class="t" id="t153" style="font-size:8.3px;color:#20253a;transform:translate(558.70px,279.98px) scaleX(0.8236);-webkit-text-stroke:0.2px #20253a;">4 500,00</span>
<svg style="left:250px;top:292px" width="28" height="13"><rect x="0.80" y="0.30" width="26.40" height="12.70" fill="#fafafa"/></svg>
<svg style="left:278px;top:292px" width="277" height="13"><rect x="0.60" y="0.30" width="276.00" height="12.70" fill="#fafafa"/></svg>
<svg style="left:555px;top:292px" width="141" height="13"><rect x="0.80" y="0.30" width="139.80" height="12.70" fill="#ffffff"/></svg>
<span class="t" id="t154" style="font-size:8.3px;color:#20253a;transform:translate(270.24px,294.66px) scaleX(0.9000);-webkit-text-stroke:0.2px #20253a;">7</span>
<span class="t" id="t155" style="font-size:8.3px;color:#20253a;transform:translate(281.40px,294.65px) scaleX(0.8992);-webkit-text-stroke:0.2px #20253a;">Pozarolnicza działalność gospodarcza - koszty uzyskania przychodu</span>
<span class="t" id="t156" style="font-size:8.3px;color:#20253a;transform:translate(558.70px,294.65px) scaleX(0.8294);-webkit-text-stroke:0.2px #20253a;">0,00</span>
<svg style="left:250px;top:306px" width="28" height="14"><rect x="0.80" y="0.98" width="26.40" height="12.70" fill="#fafafa"/></svg>
<svg style="left:278px;top:306px" width="277" height="14"><rect x="0.60" y="0.98" width="276.00" height="12.70" fill="#fafafa"/></svg>
<svg style="left:555px;top:306px" width="141" height="14"><rect x="0.80" y="0.98" width="139.80" height="12.70" fill="#f8f8f8"/></svg>
<span class="t" id="t157" style="font-size:8.3px;color:#20253a;transform:translate(270.24px,309.34px) scaleX(0.9000);-webkit-text-stroke:0.2px #20253a;">8</span>
<span class="t" id="t158" style="font-size:8.3px;color:#20253a;transform:translate(281.40px,309.33px) scaleX(0.9038);-webkit-text-stroke:0.2px #20253a;">Pozarolnicza działalność gospodarcza - dochód</span>
<span class="t" id="t159" style="font-size:8.3px;color:#20253a;transform:translate(558.70px,309.33px) scaleX(0.8236);-webkit-text-stroke:0.2px #20253a;">4 500,00</span>
<svg style="left:250px;top:321px" width="28" height="14"><rect x="0.80" y="0.66" width="26.40" height="12.70" fill="#fafafa"/></svg>
<svg style="left:278px;top:321px" width="277" height="14"><rect x="0.60" y="0.66" width="276.00" height="12.70" fill="#fafafa"/></svg>
<svg style="left:555px;top:321px" width="141" height="14"><rect x="0.80" y="0.66" width="139.80" height="12.70" fill="#f8f8f8"/></svg>
<span class="t" id="t160" style="font-size:8.3px;color:#20253a;transform:translate(270.24px,324.00px) scaleX(0.9000);-webkit-text-stroke:0.2px #20253a;">9</span>
<span class="t" id="t161" style="font-size:8.3px;color:#20253a;transform:translate(281.40px,324.00px) scaleX(0.8958);-webkit-text-stroke:0.2px #20253a;">Pozarolnicza działalność gospodarcza - strata</span>
<span class="t" id="t162" style="font-size:8.3px;color:#20253a;transform:translate(558.70px,323.99px) scaleX(0.8294);-webkit-text-stroke:0.2px #20253a;">0,00</span>
<svg style="left:250px;top:336px" width="28" height="14"><rect x="0.80" y="0.34" width="26.40" height="12.70" fill="#fafafa"/></svg>
<svg style="left:278px;top:336px" width="277" height="14"><rect x="0.60" y="0.34" width="276.00" height="12.70" fill="#fafafa"/></svg>
<svg style="left:555px;top:336px" width="141" height="14"><rect x="0.80" y="0.34" width="139.80" height="12.70" fill="#ffffff"/></svg>
<span class="t" id="t163" style="font-size:8.3px;color:#20253a;transform:translate(266.09px,338.67px) scaleX(0.9000);-webkit-text-stroke:0.2px #20253a;">10</span>
<span class="t" id="t164" style="font-size:8.3px;color:#20253a;transform:translate(281.40px,338.67px) scaleX(0.9064);-webkit-text-stroke:0.2px #20253a;">Pozostałe przychody - przychód</span>
<span class="t" id="t165" style="font-size:8.3px;color:#20253a;transform:translate(558.70px,338.67px) scaleX(0.8236);-webkit-text-stroke:0.2px #20253a;">1 000,00</span>
<svg style="left:250px;top:351px" width="28" height="13"><rect x="0.80" y="0.02" width="26.40" height="12.70" fill="#fafafa"/></svg>
<svg style="left:278px;top:351px" width="277" height="13"><rect x="0.60" y="0.02" width="276.00" height="12.70" fill="#fafafa"/></svg>
<svg style="left:555px;top:351px" width="141" height="13"><rect x="0.80" y="0.02" width="139.80" height="12.70" fill="#ffffff"/></svg>
<span class="t" id="t166" style="font-size:8.3px;color:#20253a;transform:translate(266.64px,353.35px) scaleX(0.9000);-webkit-text-stroke:0.2px #20253a;">11</span>
<span class="t" id="t167" style="font-size:8.3px;color:#20253a;transform:translate(281.40px,353.35px) scaleX(0.8964);-webkit-text-stroke:0.2px #20253a;">Pozostałe przychody - koszt</span>
<span class="t" id="t168" style="font-size:8.3px;color:#20253a;transform:translate(558.70px,353.27px) scaleX(0.8294);-webkit-text-stroke:0.2px #20253a;">0,00</span>
<svg style="left:250px;top:365px" width="28" height="14"><rect x="0.80" y="0.70" width="26.40" height="12.70" fill="#fafafa"/></svg>
<svg style="left:278px;top:365px" width="277" height="14"><rect x="0.60" y="0.70" width="276.00" height="12.70" fill="#fafafa"/></svg>
<svg style="left:555px;top:365px" width="141" height="14"><rect x="0.80" y="0.70" width="139.80" height="12.70" fill="#f8f8f8"/></svg>
<span class="t" id="t169" style="font-size:8.3px;color:#20253a;transform:translate(266.09px,367.95px) scaleX(0.9000);-webkit-text-stroke:0.2px #20253a;">12</span>
<span class="t" id="t170" style="font-size:8.3px;color:#20253a;transform:translate(281.40px,367.95px) scaleX(0.9140);-webkit-text-stroke:0.2px #20253a;">Pozostałe przychody - dochód</span>
<span class="t" id="t171" style="font-size:8.3px;color:#20253a;transform:translate(558.70px,367.95px) scaleX(0.8236);-webkit-text-stroke:0.2px #20253a;">1 000,00</span>
<svg style="left:250px;top:380px" width="28" height="14"><rect x="0.80" y="0.38" width="26.40" height="12.70" fill="#fafafa"/></svg>
<svg style="left:278px;top:380px" width="277" height="14"><rect x="0.60" y="0.38" width="276.00" height="12.70" fill="#fafafa"/></svg>
<svg style="left:555px;top:380px" width="141" height="14"><rect x="0.80" y="0.38" width="139.80" height="12.70" fill="#f8f8f8"/></svg>
<span class="t" id="t172" style="font-size:8.3px;color:#20253a;transform:translate(266.09px,382.63px) scaleX(0.9000);-webkit-text-stroke:0.2px #20253a;">13</span>
<span class="t" id="t173" style="font-size:8.3px;color:#20253a;transform:translate(281.40px,382.63px) scaleX(0.8993);-webkit-text-stroke:0.2px #20253a;">Pozstałe przychody - strata</span>
<span class="t" id="t174" style="font-size:8.3px;color:#20253a;transform:translate(558.70px,382.63px) scaleX(0.8294);-webkit-text-stroke:0.2px #20253a;">0,00</span>
<svg style="left:250px;top:395px" width="28" height="13"><rect x="0.80" y="0.06" width="26.40" height="12.70" fill="#fafafa"/></svg>
<svg style="left:278px;top:395px" width="277" height="13"><rect x="0.60" y="0.06" width="276.00" height="12.70" fill="#fafafa"/></svg>
<svg style="left:555px;top:395px" width="141" height="13"><rect x="0.80" y="0.06" width="139.80" height="12.70" fill="#f8f8f8"/></svg>
<span class="t" id="t175" style="font-size:8.3px;color:#20253a;transform:translate(266.09px,397.43px) scaleX(0.9000);-webkit-text-stroke:0.2px #20253a;">14</span>
<span class="t" id="t176" style="font-size:8.3px;color:#20253a;transform:translate(281.40px,397.43px) scaleX(0.8971);-webkit-text-stroke:0.2px #20253a;">Razem - przychód</span>
<span class="t" id="t177" style="font-size:8.3px;color:#20253a;transform:translate(558.70px,397.42px) scaleX(0.8236);-webkit-text-stroke:0.2px #20253a;">5 500,00</span>
<svg style="left:250px;top:409px" width="28" height="14"><rect x="0.80" y="0.74" width="26.40" height="12.70" fill="#fafafa"/></svg>
<svg style="left:278px;top:409px" width="277" height="14"><rect x="0.60" y="0.74" width="276.00" height="12.70" fill="#fafafa"/></svg>
<svg style="left:555px;top:409px" width="141" height="14"><rect x="0.80" y="0.74" width="139.80" height="12.70" fill="#f8f8f8"/></svg>
<span class="t" id="t178" style="font-size:8.3px;color:#20253a;transform:translate(266.09px,412.10px) scaleX(0.9000);-webkit-text-stroke:0.2px #20253a;">15</span>
<span class="t" id="t179" style="font-size:8.3px;color:#20253a;transform:translate(281.40px,412.10px) scaleX(0.8816);-webkit-text-stroke:0.2px #20253a;">Razem - koszty</span>
<span class="t" id="t180" style="font-size:8.3px;color:#20253a;transform:translate(558.70px,412.10px) scaleX(0.8350);-webkit-text-stroke:0.2px #20253a;">800,00</span>
<svg style="left:250px;top:424px" width="28" height="14"><rect x="0.80" y="0.42" width="26.40" height="12.70" fill="#fafafa"/></svg>
<svg style="left:278px;top:424px" width="277" height="14"><rect x="0.60" y="0.42" width="276.00" height="12.70" fill="#fafafa"/></svg>
<svg style="left:555px;top:424px" width="141" height="14"><rect x="0.80" y="0.42" width="139.80" height="12.70" fill="#f8f8f8"/></svg>
<span class="t" id="t181" style="font-size:8.3px;color:#20253a;transform:translate(266.09px,426.77px) scaleX(0.9000);-webkit-text-stroke:0.2px #20253a;">16</span>
<span class="t" id="t182" style="font-size:8.3px;color:#20253a;transform:translate(281.40px,426.77px) scaleX(0.9068);-webkit-text-stroke:0.2px #20253a;">Razem - dochód</span>
<span class="t" id="t183" style="font-size:8.3px;color:#20253a;transform:translate(558.70px,426.77px) scaleX(0.8236);-webkit-text-stroke:0.2px #20253a;">4 700,00</span>
<svg style="left:250px;top:439px" width="28" height="13"><rect x="0.80" y="0.10" width="26.40" height="12.70" fill="#fafafa"/></svg>
<svg style="left:278px;top:439px" width="277" height="13"><rect x="0.60" y="0.10" width="276.00" height="12.70" fill="#fafafa"/></svg>
<svg style="left:555px;top:439px" width="141" height="13"><rect x="0.80" y="0.10" width="139.80" height="12.70" fill="#f8f8f8"/></svg>
<span class="t" id="t184" style="font-size:8.3px;color:#20253a;transform:translate(266.09px,441.44px) scaleX(0.9000);-webkit-text-stroke:0.2px #20253a;">17</span>
<span class="t" id="t185" style="font-size:8.3px;color:#20253a;transform:translate(281.40px,441.45px) scaleX(0.8749);-webkit-text-stroke:0.2px #20253a;">Razem - strata</span>
<span class="t" id="t186" style="font-size:8.3px;color:#20253a;transform:translate(558.70px,441.44px) scaleX(0.8294);-webkit-text-stroke:0.2px #20253a;">0,00</span>
<span class="t" id="t187" style="font-size:8.4px;color:#20253a;transform:translate(271.00px,453.34px) scaleX(0.8439);-webkit-text-stroke:0.18px #20253a;">D. DOCHÓD PO ODLICZENIU STRAT</span>
<svg style="left:253px;top:458.08px" width="8" height="5"><path d="M0.5 4.2 L3.8 0.9 L7.1 4.2" fill="none" stroke="#333" stroke-width="1"/></svg>
</body></html>
